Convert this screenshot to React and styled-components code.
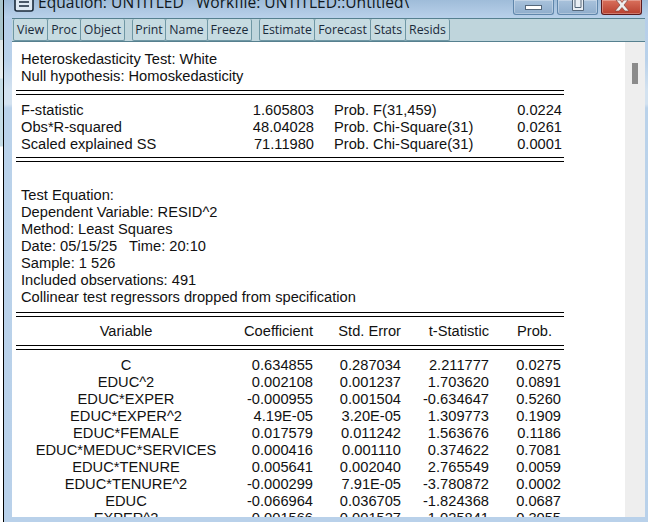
import styled, { createGlobalStyle } from "styled-components";

const GlobalStyle = createGlobalStyle`
  html, body {
    margin: 0;
    padding: 0;
    width: 648px;
    height: 522px;
    overflow: hidden;
    background: #fff;
  }
`;

const Page = styled.div`
  width: 648px;
  height: 522px;
  display: flex;
  overflow: hidden;
`;

const BehindWindow = styled.div`
  width: 3px;
  flex: none;
  background: linear-gradient(
    #a9c4cc 0,
    #a9c4cc 40px,
    #dfe6e8 40px,
    #e8eef0 78px,
    #c6dce6 79px,
    #c6dce6 146px,
    #ffffff 147px,
    #ffffff 100%
  );
  border-right: 1px solid #000;
`;

const Frame = styled.div`
  flex: 1;
  height: 522px;
  display: flex;
  flex-direction: column;
  background: linear-gradient(#b4cde8 0, #b9d1ea 60px, #d3e2f0 90px, #d3e2f0 104px, #bad2ea 108px, #b9d1ea 100%);
`;

const TitleBar = styled.div`
  height: 18px;
  flex: none;
  display: flex;
  align-items: flex-end;
  padding: 0 6px 0 10px;
  background: linear-gradient(#9fbcd9, #b9d1ea);
  overflow: hidden;
`;

const TitleIcon = styled.svg`
  width: 20px;
  height: 18px;
  flex: none;
  margin-bottom: 6px;
`;

const TitleText = styled.div`
  flex: 1;
  margin: 0 0 6px 4px;
  font: 15.6px/20px "Open Sans", sans-serif;
  color: #101820;
  white-space: pre;
`;

const WinButtons = styled.div`
  display: flex;
  gap: 3px;
  align-self: flex-start;
`;

const WinButton = styled.div`
  width: ${(p) => p.$w}px;
  height: 15px;
  box-sizing: border-box;
  border: 1px solid ${(p) => (p.$close ? "#5a1a1e" : "#5f86ab")};
  border-top: 0;
  border-radius: 0 0 3px 3px;
  background: ${(p) =>
    p.$close
      ? "linear-gradient(#d9705c, #b8402f)"
      : "linear-gradient(#a9c2dc, #8fadcc)"};
  box-shadow: inset 0 0 0 1px rgba(255, 255, 255, 0.3);
  display: flex;
  justify-content: center;
`;

const Client = styled.div`
  flex: 1;
  min-height: 0;
  margin: 0 3px 5px 8px;
  display: flex;
  flex-direction: column;
  overflow: hidden;
`;

const Toolbar = styled.div`
  height: 24px;
  box-sizing: border-box;
  flex: none;
  display: flex;
  align-items: flex-start;
  padding-left: 1px;
  background: #bfd5dc;
  border-top: 1px solid #56808f;
  border-bottom: 1px solid #56808f;
`;

const ToolGroup = styled.div`
  display: flex;
  margin-right: ${(p) => (p.$last ? 0 : 8)}px;
`;

const ToolButton = styled.div`
  width: ${(p) => p.$w}px;
  height: 22px;
  box-sizing: border-box;
  border: 1px solid #6f97a4;
  border-top: 0;
  border-radius: 2px;
  margin-right: -1px;
  text-align: center;
  font: 12.3px/21px "Open Sans", sans-serif;
  color: #1a2a3a;
  background: #c6dbe1;
`;

const Body = styled.div`
  flex: 1;
  min-height: 0;
  display: flex;
  overflow: hidden;
`;

const Sheet = styled.div`
  flex: 1;
  padding: 9px 0 0 4px;
  background: #fff;
  overflow: hidden;
  font: 14.67px/17px "Liberation Sans", Arial, sans-serif;
  color: #111;
`;

const Scrollbar = styled.div`
  width: 20px;
  flex: none;
  background: #eeeeee;
  padding: 21px 0 0 7px;
  box-sizing: border-box;
`;

const Thumb = styled.div`
  width: 6px;
  height: 21px;
  background: #8b8b8b;
`;

const TextLine = styled.div`
  padding-left: 5px;
  white-space: pre;
`;

const Rule = styled.div`
  width: 548px;
  height: 5px;
  box-sizing: border-box;
  border-top: 1px solid #000;
  border-bottom: 1px solid #000;
  margin: ${(p) => p.$top || 0}px 0 ${(p) => p.$bottom || 0}px;
`;

const StatRow = styled.div`
  width: 541px;
  padding-left: 5px;
  display: grid;
  grid-template-columns: 230px 63px 1fr 60px;
  white-space: pre;
`;

const StatLabel = styled.span`
  grid-column: ${(p) => p.$col};
  padding-left: ${(p) => p.$pad || 0}px;
`;

const Num = styled.span`
  text-align: right;
`;

const TableRow = styled.div`
  width: 545px;
  display: grid;
  grid-template-columns: 220px 77px 88px 88px 72px;
  white-space: pre;
`;

const Cell = styled.span`
  text-align: ${(p) => (p.$center ? "center" : "right")};
  padding-right: ${(p) => p.$pad || 0}px;
`;

const stats = [
  ["F-statistic", "1.605803", "Prob. F(31,459)", "0.0224"],
  ["Obs*R-squared", "48.04028", "Prob. Chi-Square(31)", "0.0261"],
  ["Scaled explained SS", "71.11980", "Prob. Chi-Square(31)", "0.0001"],
];

const equation = [
  "Test Equation:",
  "Dependent Variable: RESID^2",
  "Method: Least Squares",
  "Date: 05/15/25   Time: 20:10",
  "Sample: 1 526",
  "Included observations: 491",
  "Collinear test regressors dropped from specification",
];

const rows = [
  ["C", "0.634855", "0.287034", "2.211777", "0.0275"],
  ["EDUC^2", "0.002108", "0.001237", "1.703620", "0.0891"],
  ["EDUC*EXPER", "-0.000955", "0.001504", "-0.634647", "0.5260"],
  ["EDUC*EXPER^2", "4.19E-05", "3.20E-05", "1.309773", "0.1909"],
  ["EDUC*FEMALE", "0.017579", "0.011242", "1.563676", "0.1186"],
  ["EDUC*MEDUC*SERVICES", "0.000416", "0.001110", "0.374622", "0.7081"],
  ["EDUC*TENURE", "0.005641", "0.002040", "2.765549", "0.0059"],
  ["EDUC*TENURE^2", "-0.000299", "7.91E-05", "-3.780872", "0.0002"],
  ["EDUC", "-0.066964", "0.036705", "-1.824368", "0.0687"],
  ["EXPER^2", "0.001566", "0.001527", "1.025841", "0.3055"],
];

const toolGroups = [
  [["View", 35], ["Proc", 34], ["Object", 45]],
  [["Print", 34], ["Name", 43], ["Freeze", 45]],
  [["Estimate", 56], ["Forecast", 57], ["Stats", 36], ["Resids", 45]],
];

export default function App() {
  return (
    <Page>
      <GlobalStyle />
      <BehindWindow />
      <Frame>
        <TitleBar>
          <TitleIcon viewBox="0 0 20 18">
            <rect x="1" y="1" width="18" height="16" rx="2" fill="#dfeaf4" stroke="#1a2a3a" strokeWidth="1.6" />
            <path d="M5 4h10M5 8h10M5 12h10" stroke="#1a2a3a" strokeWidth="1.6" />
          </TitleIcon>
          <TitleText>Equation: UNTITLED   Workfile: UNTITLED::Untitled\</TitleText>
          <WinButtons>
            <WinButton $w={41}>
              <svg width="18" height="12" viewBox="0 0 18 12">
                <rect x="0.5" y="5.5" width="16" height="4" fill="#fff" stroke="#55677a" />
              </svg>
            </WinButton>
            <WinButton $w={41}>
              <svg width="16" height="12" viewBox="0 0 16 12">
                <path d="M2.5 0v10.5h11V0M5 0v7.5h6V0" fill="#e8eef4" stroke="#55677a" />
              </svg>
            </WinButton>
            <WinButton $w={41} $close>
              <svg width="20" height="13" viewBox="0 0 20 13">
                <path d="M4 0h4l2 2.5L12 0h4l-4 5 5 6h-4l-3-3.5L7 11H3l5-6z" fill="#eee" stroke="#7a3a34" strokeWidth="0.6" />
              </svg>
            </WinButton>
          </WinButtons>
        </TitleBar>
        <Client>
          <Toolbar>
            {toolGroups.map((group, i) => (
              <ToolGroup key={i} $last={i === toolGroups.length - 1}>
                {group.map(([label, w]) => (
                  <ToolButton key={label} $w={w}>
                    {label}
                  </ToolButton>
                ))}
              </ToolGroup>
            ))}
          </Toolbar>
          <Body>
            <Sheet>
              <TextLine>Heteroskedasticity Test: White</TextLine>
              <TextLine>Null hypothesis: Homoskedasticity</TextLine>
              <Rule $top={5} $bottom={7} />
              {stats.map(([a, b, c, d]) => (
                <StatRow key={a}>
                  <StatLabel $col={1}>{a}</StatLabel>
                  <Num>{b}</Num>
                  <StatLabel $col={3} $pad={20}>{c}</StatLabel>
                  <Num>{d}</Num>
                </StatRow>
              ))}
              <Rule $top={4} $bottom={25} />
              {equation.map((line) => (
                <TextLine key={line}>{line}</TextLine>
              ))}
              <Rule $top={6} $bottom={6} />
              <TableRow>
                <Cell $center>Variable</Cell>
                <Cell>Coefficient</Cell>
                <Cell>Std. Error</Cell>
                <Cell>t-Statistic</Cell>
                <Cell $pad={9}>Prob.</Cell>
              </TableRow>
              <Rule $top={5} $bottom={7} />
              {rows.map(([name, ...values]) => (
                <TableRow key={name}>
                  <Cell $center>{name}</Cell>
                  {values.map((v, i) => (
                    <Cell key={i}>{v}</Cell>
                  ))}
                </TableRow>
              ))}
            </Sheet>
            <Scrollbar>
              <Thumb />
            </Scrollbar>
          </Body>
        </Client>
      </Frame>
    </Page>
  );
}
